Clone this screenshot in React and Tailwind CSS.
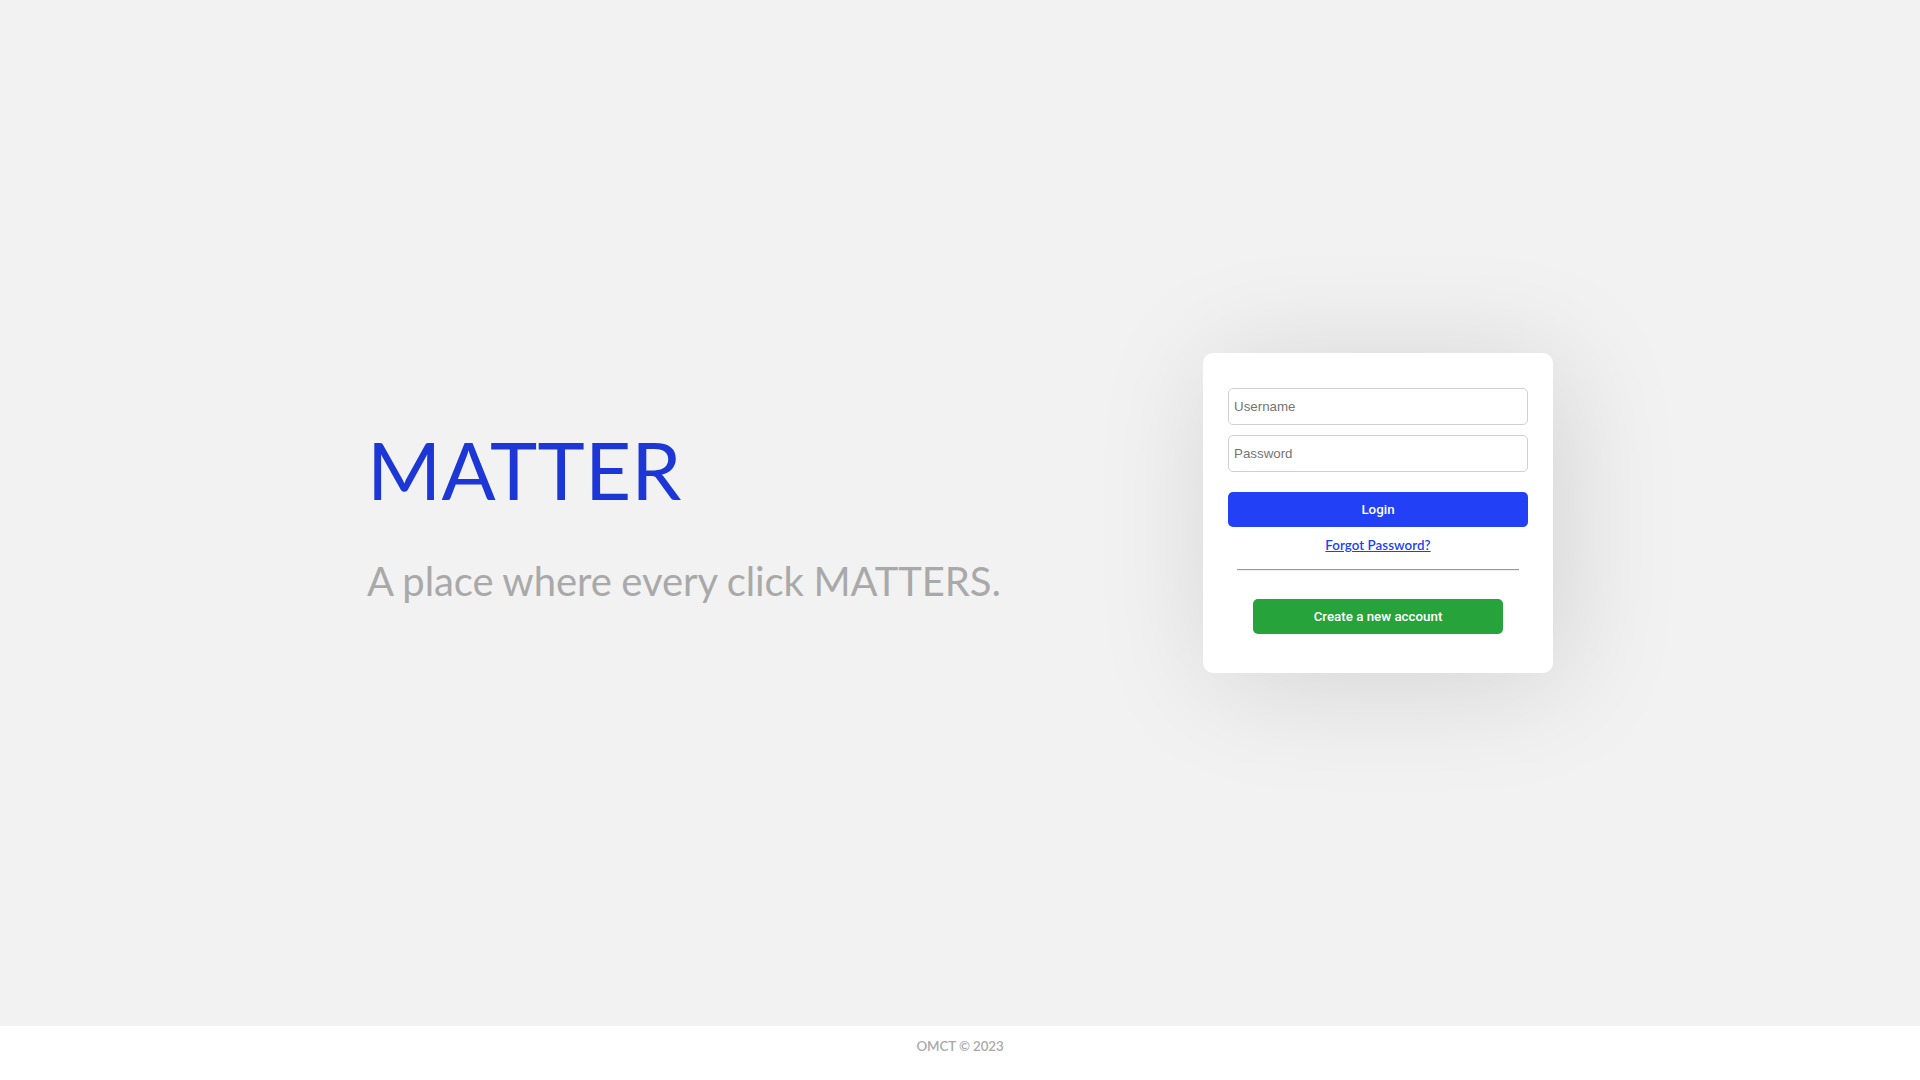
export default function App() {
  return (
    <div className="flex h-[1080px] flex-col bg-white font-['Lato',sans-serif]">
      <main className="flex h-[1026px] items-center bg-[#f2f2f2] pl-[367px]">
        <section className="w-[836px]">
          <h1 className="text-[80px] leading-[96px] tracking-[0.15px] text-[#1d37d7]">MATTER</h1>
          <p className="mt-[40px] text-[40px] leading-[48px] tracking-[-0.08px] [word-spacing:-0.5px] text-[#a9a9a9]">A place where every click MATTERS.</p>
        </section>
        <section className="flex h-[320px] w-[350px] flex-col items-center rounded-[10px] bg-white pt-[35px] shadow-[10px_10px_120px_rgba(0,0,0,0.13)]">
          <input placeholder="Username" className="h-[37px] w-[300px] rounded-[5px] border border-[#d0d0d0] px-[5px] font-['Liberation_Sans',sans-serif] text-[13.333px] placeholder:text-[#757575]" />
          <input placeholder="Password" className="mt-[10px] h-[37px] w-[300px] rounded-[5px] border border-[#d0d0d0] px-[5px] font-['Liberation_Sans',sans-serif] text-[13.333px] placeholder:text-[#757575]" />
          <button className="mt-[20px] h-[35px] w-[300px] rounded-[5px] bg-[#2240f5] font-['Roboto',sans-serif] text-[13.333px] font-medium text-white">Login</button>
          <a className="mt-[10px] text-[13.333px] leading-[16px] font-semibold tracking-[0.05px] text-[#213ef3] underline">Forgot Password?</a>
          <hr className="mt-[16px] h-[2px] w-[282px] border-t border-b border-t-[#999] border-b-[#eee]" />
          <button className="mt-[28px] h-[35px] w-[250px] rounded-[5px] bg-[#26a33a] font-['Roboto',sans-serif] text-[13.333px] font-medium text-white">Create a new account</button>
        </section>
      </main>
      <footer className="pt-[12px] text-center text-[13.333px] leading-[16px] font-semibold tracking-[-0.1px] text-[#a9a9a9]">OMCT © 2023</footer>
    </div>
  );
}
